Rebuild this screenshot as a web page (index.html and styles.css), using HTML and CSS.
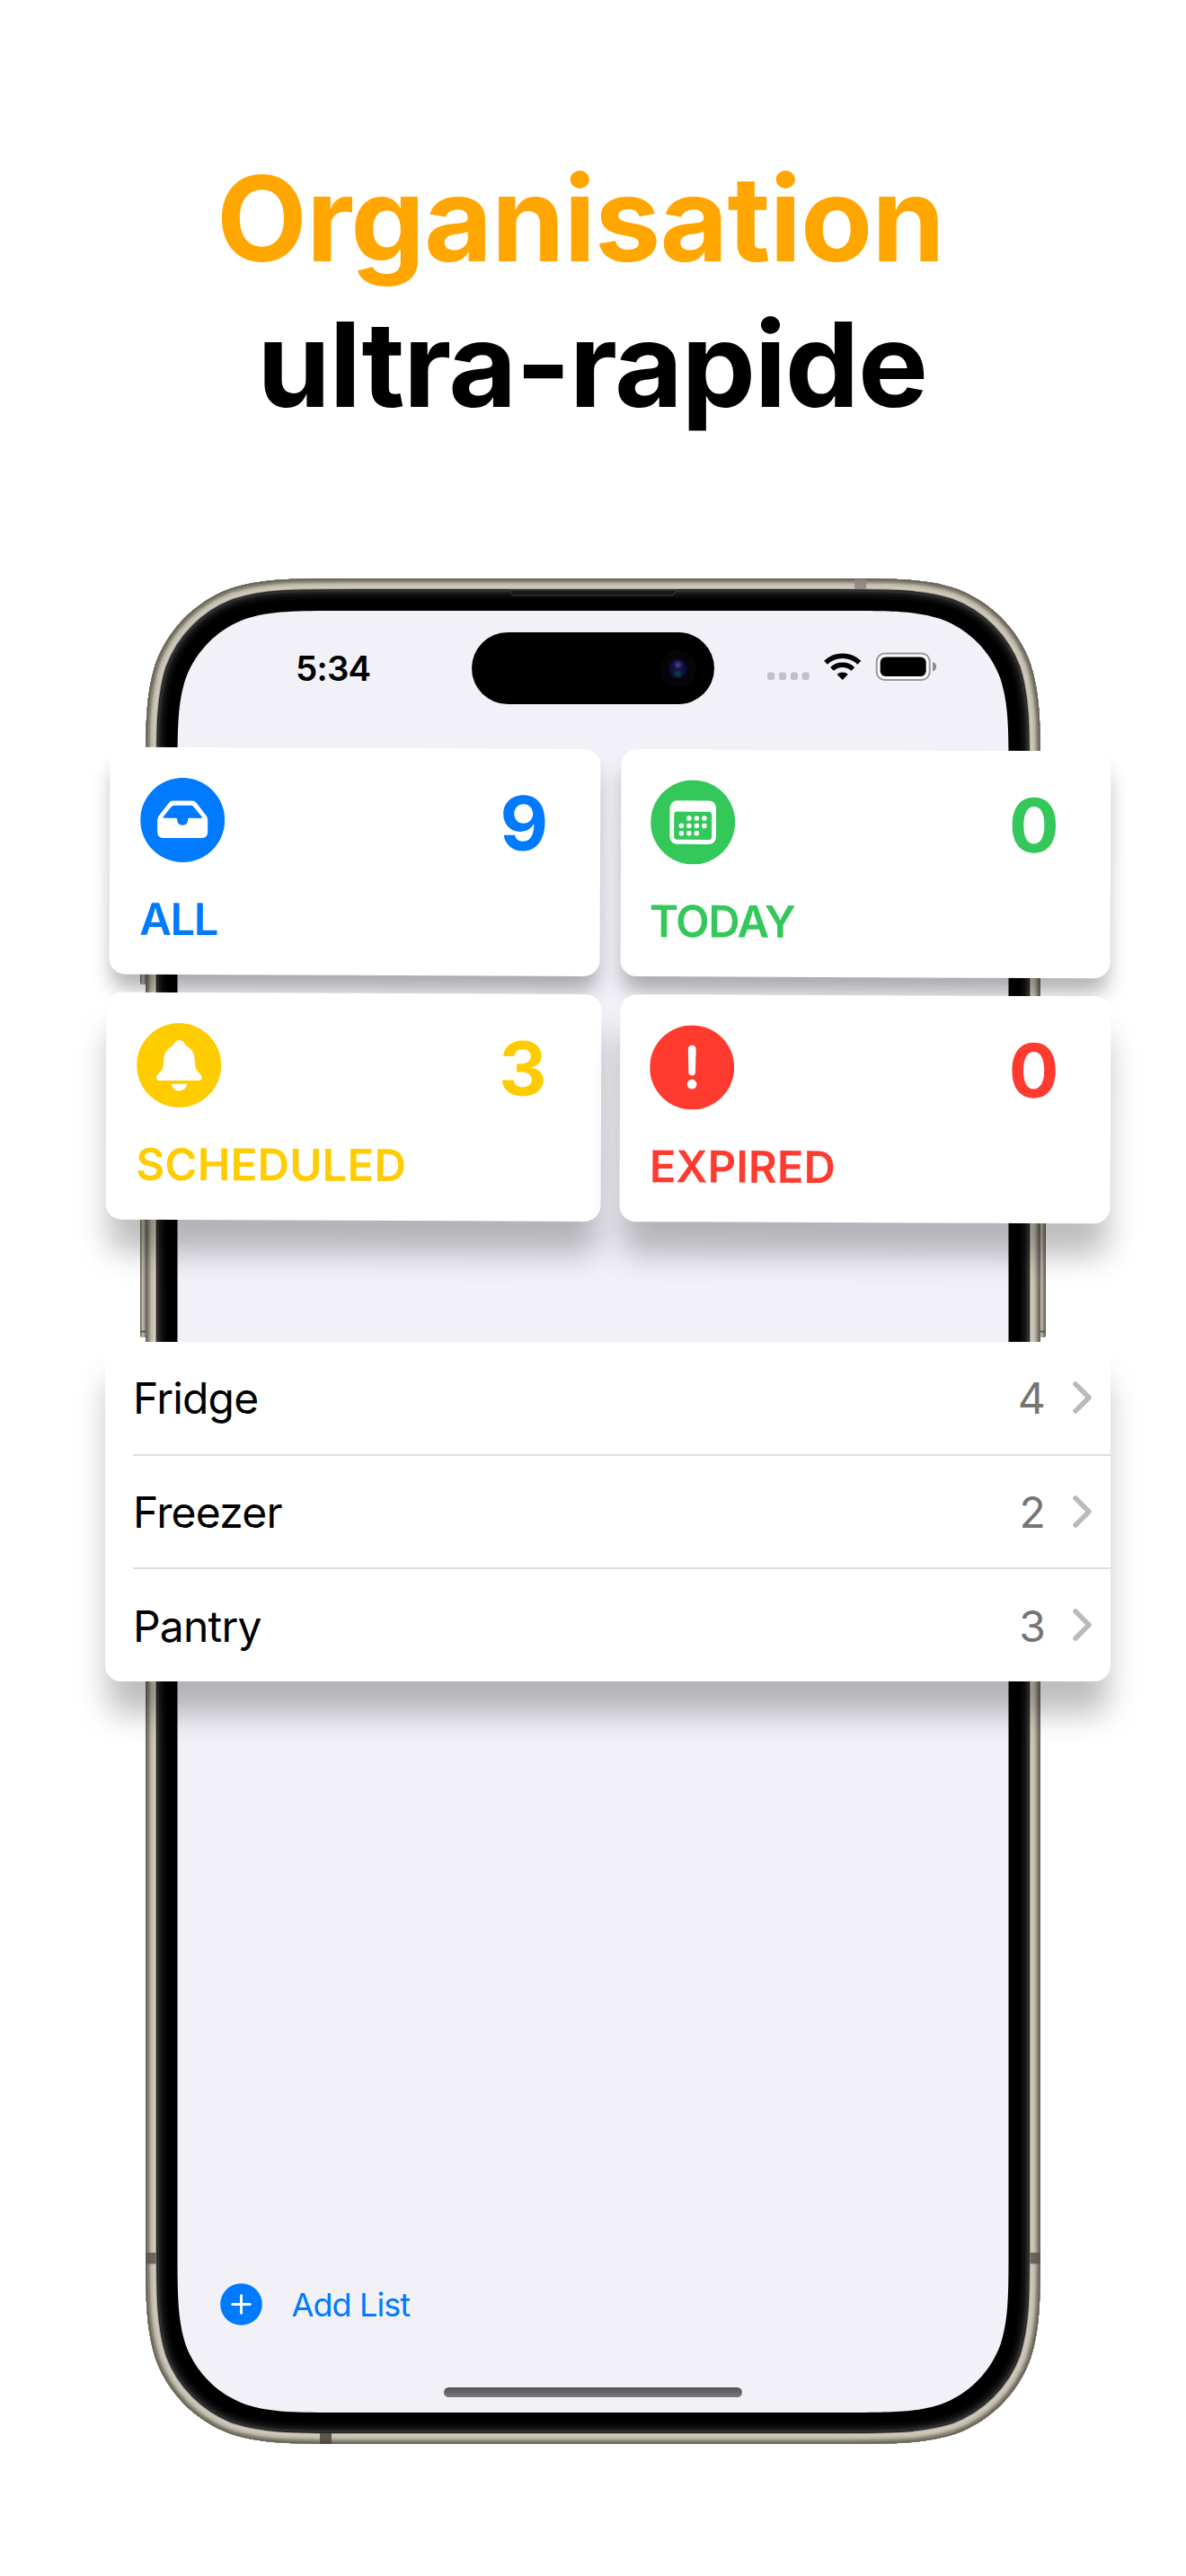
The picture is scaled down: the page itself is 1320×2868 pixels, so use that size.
FILE: index.html
```html
<!DOCTYPE html>
<html lang="fr">
<head>
    <meta charset="UTF-8">
    <meta name="viewport" content="width=device-width, initial-scale=1.0">
    <title>Organisation ultra-rapide</title>
    <link rel="stylesheet" href="styles.css">
</head>
<body>
    <h1 class="title">
        <span class="title-accent">Organisation</span>
        <span class="title-main">ultra-rapide</span>
    </h1>

    <div class="phone">
        <!-- Phone body -->
        <svg class="phone-body" viewBox="-10 0 1016 2077" width="1016" height="2077">
            <defs>
                <path id="shell" d="M229.3 0H766.7C832.7 0 865.7 0 901.3 11.2C940.1 25.4 970.6 55.9 984.8 94.7C996 130.3 996 163.3 996 229.3V1847.7C996 1913.7 996 1946.7 984.8 1982.3C970.6 2021.1 940.1 2051.6 901.3 2065.8C865.7 2077 832.7 2077 766.7 2077H229.3C163.3 2077 130.3 2077 94.7 2065.8C55.9 2051.6 25.4 2021.1 11.2 1982.3C0 1946.7 0 1913.7 0 1847.7V229.3C0 163.3 0 130.3 11.2 94.7C25.4 55.9 55.9 25.4 94.7 11.2C130.3 0 163.3 0 229.3 0Z"/>
                <clipPath id="shellClip"><use href="#shell"/></clipPath>
                <linearGradient id="button" x1="0" x2="1" y1="0" y2="0">
                    <stop offset="0" stop-color="#5d584d"/>
                    <stop offset="0.35" stop-color="#c4bfb0"/>
                    <stop offset="1" stop-color="#5d584d"/>
                </linearGradient>
            </defs>
            <rect x="-6" y="300" width="8" height="152" rx="2" fill="url(#button)"/>
            <rect x="-6" y="580" width="8" height="265" rx="2" fill="url(#button)"/>
            <rect x="994" y="560" width="8" height="285" rx="2" fill="url(#button)"/>
            <path d="M-6 838.500H0M996 838.500H1002" stroke="#5d584d" stroke-width="2"/>
            <g clip-path="url(#shellClip)" fill="none">
                <use href="#shell" fill="#000"/>
                <use href="#shell" stroke="#060606" stroke-width="46"/>
                <use href="#shell" stroke="#101010" stroke-width="40"/>
                <use href="#shell" stroke="#1e1e1e" stroke-width="34"/>
                <use href="#shell" stroke="#303030" stroke-width="30"/>
                <use href="#shell" stroke="#25231e" stroke-width="26"/>
                <use href="#shell" stroke="#a39e90" stroke-width="24"/>
                <use href="#shell" stroke="#cdc8b9" stroke-width="22"/>
                <use href="#shell" stroke="#bfbaab" stroke-width="16"/>
                <use href="#shell" stroke="#a39e90" stroke-width="11"/>
                <use href="#shell" stroke="#878275" stroke-width="8"/>
                <use href="#shell" stroke="#6c675b" stroke-width="4"/>
                <rect x="789" y="1" width="13" height="11" fill="#8d847e" opacity="0.85"/>
                <rect x="194" y="2065" width="13" height="12" fill="#4a433d" opacity="0.85"/>
                <rect x="0" y="1864" width="11.5" height="12.5" fill="#5c554f" opacity="0.85"/>
                <rect x="984.5" y="1864" width="11.5" height="12.5" fill="#5c554f" opacity="0.85"/>
            </g>
            <path d="M405 13L409 19H587L591 13Z" fill="#161616" stroke="#3c3c3c" stroke-width="1"/>
            <path fill="#f2f1f8" d="M218.9 36H777.1C829.9 36 856.3 36 884.7 45C915.8 56.3 940.2 80.7 951.5 111.8C960.5 140.2 960.5 166.6 960.5 219.4V1858.6C960.5 1911.4 960.5 1937.8 951.5 1966.2C940.2 1997.3 915.8 2021.7 884.7 2033C856.3 2042 829.9 2042 777.1 2042H218.9C166.1 2042 139.7 2042 111.3 2033C80.2 2021.7 55.8 1997.3 44.5 1966.2C35.5 1937.8 35.5 1911.4 35.5 1858.6V219.4C35.5 166.6 35.5 140.2 44.5 111.8C55.8 80.7 80.2 56.3 111.3 45C139.7 36 166.1 36 218.9 36Z"/>
        </svg>

        <div class="status-bar">
            <span class="time">5:34</span>
            <div class="island">
                <div class="camera"></div>
            </div>
            <svg class="status-icons" width="190" height="32" viewBox="0 0 190 32">
                <g fill="#c2c1c7">
                    <rect x="0" y="22.500" width="8" height="8.500" rx="2.500"/>
                    <rect x="13" y="22.500" width="8" height="8.500" rx="2.500"/>
                    <rect x="26" y="22.500" width="8" height="8.500" rx="2.500"/>
                    <rect x="38.700" y="22.500" width="8" height="8.500" rx="2.500"/>
                </g>
                <path d="M65 11.800A27 27 0 0 1 102.400 11.800" fill="none" stroke="#000" stroke-width="5.600"/>
                <path d="M72 18.900A17 17 0 0 1 95.400 18.900" fill="none" stroke="#000" stroke-width="5.400"/>
                <path d="M77.500 24.800A9.500 9.500 0 0 1 89.900 24.800L83.700 31Z" fill="#000"/>
                <rect x="121.700" y="1.500" width="59" height="29.500" rx="9" fill="#fbfbfd" stroke="#98979c" stroke-width="2"/>
                <rect x="125.700" y="5.500" width="51" height="21.500" rx="6" fill="#000"/>
                <path d="M184 11Q188 12 188 16.300Q188 20.500 184 21.500Z" fill="#8e8d93"/>
            </svg>
        </div>

        <div class="toolbar">
            <svg width="47" height="47" viewBox="0 0 47 47">
                <circle cx="23.500" cy="23.500" r="23.300" fill="#007aff"/>
                <path d="M23.500 13.800V33.200M13.800 23.500H33.200" stroke="#fff" stroke-width="3" stroke-linecap="round"/>
            </svg>
            <span class="add-list">Add List</span>
        </div>
        <div class="home-indicator"></div>

        <!-- Enlarged widgets over the phone -->
        <div class="widgets">
            <div class="card-row card-row-top">
                <div class="card blue">
                    <div class="card-head">
                        <svg class="card-icon" viewBox="0 0 94 94">
                            <circle cx="47" cy="47" r="47" fill="currentColor"/>
                            <path d="M36 25.500H58Q61 25.500 62.600 28.200L73.300 42Q75 44.200 75 47V60.500Q75 67 68.500 67H25.500Q19 67 19 60.500V47Q19 44.200 20.700 42L31.400 28.200Q33 25.500 36 25.500Z" fill="#fff"/>
                            <path d="M37.500 30.800H56.500Q58.500 30.800 59.500 32.400L68.500 43.300Q69.300 44.800 67.500 44.800H54.600Q53 44.800 53 46.300Q53 52.800 47 52.800Q41 52.800 41 46.300Q41 44.800 39.400 44.800H26.500Q24.700 44.800 25.500 43.300L34.500 32.400Q35.500 30.800 37.500 30.800Z" fill="currentColor"/>
                        </svg>
                        <span class="count">9</span>
                    </div>
                    <div class="card-label">ALL</div>
                </div>
                <div class="card green">
                    <div class="card-head">
                        <svg class="card-icon" viewBox="0 0 94 94">
                            <circle cx="47" cy="47" r="47" fill="currentColor"/>
                            <rect x="21.300" y="23" width="51.500" height="48.500" rx="8" fill="#fff"/>
                            <rect x="26" y="35.300" width="42" height="31.200" rx="3.500" fill="currentColor"/>
                            <g fill="#fff">
                                <rect x="40" y="40" width="5.400" height="5.400" rx="1.800"/>
                                <rect x="48.500" y="40" width="5.400" height="5.400" rx="1.800"/>
                                <rect x="57" y="40" width="5.400" height="5.400" rx="1.800"/>
                                <rect x="31.500" y="48.300" width="5.400" height="5.400" rx="1.800"/>
                                <rect x="40" y="48.300" width="5.400" height="5.400" rx="1.800"/>
                                <rect x="48.500" y="48.300" width="5.400" height="5.400" rx="1.800"/>
                                <rect x="57" y="48.300" width="5.400" height="5.400" rx="1.800"/>
                                <rect x="31.500" y="56.700" width="5.400" height="5.400" rx="1.800"/>
                                <rect x="40" y="56.700" width="5.400" height="5.400" rx="1.800"/>
                                <rect x="48.500" y="56.700" width="5.400" height="5.400" rx="1.800"/>
                            </g>
                        </svg>
                        <span class="count">0</span>
                    </div>
                    <div class="card-label">TODAY</div>
                </div>
            </div>

            <div class="card-row card-row-bottom">
                <div class="card yellow">
                    <div class="card-head">
                        <svg class="card-icon" viewBox="0 0 94 94">
                            <circle cx="47" cy="47" r="47" fill="currentColor"/>
                            <path d="M47.300 19.300C51 19.300 53 21.500 54.300 25C61.500 28.500 64.500 34.500 64.700 42C64.900 49 65.500 51.500 69 55C71.500 57.500 72.700 59.500 72.700 61C72.700 63 71.500 64 69.500 64H25C23 64 21.900 63 21.900 61C21.900 59.500 23 57.500 25.600 55C29.100 51.500 29.700 49 29.900 42C30.100 34.500 33 28.500 40.300 25C41.600 21.500 43.600 19.300 47.300 19.300Z" fill="#fff"/>
                            <path d="M38.800 67.700H55.800C55.300 72.500 51.800 75.400 47.300 75.400C42.800 75.400 39.300 72.500 38.800 67.700Z" fill="#fff"/>
                        </svg>
                        <span class="count">3</span>
                    </div>
                    <div class="card-label">SCHEDULED</div>
                </div>
                <div class="card red">
                    <div class="card-head">
                        <svg class="card-icon" viewBox="0 0 94 94">
                            <circle cx="47" cy="47" r="47" fill="currentColor"/>
                            <path d="M47 22.300C49.600 22.300 51.500 24 51.400 26.700L50.800 52.300C50.700 54.700 49.300 56 47 56C44.700 56 43.300 54.700 43.200 52.300L42.600 26.700C42.500 24 44.400 22.300 47 22.300Z" fill="#fff"/>
                            <circle cx="47" cy="65.800" r="5.400" fill="#fff"/>
                        </svg>
                        <span class="count">0</span>
                    </div>
                    <div class="card-label">EXPIRED</div>
                </div>
            </div>

            <ul class="list">
                <li class="list-row">
                    <span class="list-name">Fridge</span>
                    <span class="list-count">4</span>
                    <svg class="chevron" viewBox="0 0 21 36"><path d="M3 3L18 18L3 33"/></svg>
                </li>
                <li class="list-row">
                    <span class="list-name">Freezer</span>
                    <span class="list-count">2</span>
                    <svg class="chevron" viewBox="0 0 21 36"><path d="M3 3L18 18L3 33"/></svg>
                </li>
                <li class="list-row">
                    <span class="list-name">Pantry</span>
                    <span class="list-count">3</span>
                    <svg class="chevron" viewBox="0 0 21 36"><path d="M3 3L18 18L3 33"/></svg>
                </li>
            </ul>
        </div>
    </div>
</body>
</html>
```
FILE: styles.css
```css
* {
    box-sizing: border-box;
}

body {
    margin: 0;
    height: 2868px;
    padding-top: 163px;
    background-color: #fff;
    font-family: Inter, "Liberation Sans", sans-serif;
    overflow: hidden;
}

.title {
    margin: 0;
    font-size: 131px;
    line-height: 162px;
    font-weight: 700;
    text-align: center;
}

.title span {
    display: block;
}

.title-accent {
    color: #ffa600;
    letter-spacing: -1px;
    padding-right: 28px;
}

.title-main {
    color: #000;
    letter-spacing: -1.4px;
    padding-right: 2px;
}

.phone {
    position: relative;
    display: flex;
    flex-direction: column;
    width: 996px;
    height: 2077px;
    margin: 157px 0 0 162px;
    padding: 60px 0 52px;
}

.phone-body {
    position: absolute;
    top: 0;
    left: -10px;
}

.status-bar {
    position: relative;
    display: flex;
    align-items: center;
    height: 80px;
}

.time {
    width: 196px;
    margin-left: 167px;
    padding-bottom: 1px;
    font-size: 38.5px;
    font-weight: 600;
    letter-spacing: -0.8px;
}

.island {
    display: flex;
    align-items: center;
    justify-content: flex-end;
    width: 270px;
    height: 80px;
    padding-right: 30px;
    border-radius: 40px;
    background-color: #000;
}

.camera {
    width: 21px;
    height: 21px;
    border-radius: 50%;
    background: radial-gradient(circle at 50% 30%, #4c4f8c 0, #15164a 25%, transparent 45%),
        radial-gradient(circle at 50% 75%, #0d4a4c 0, #10103a 30%, #0a0a33 60%, #0c0c26 100%);
    box-shadow: 0 0 0 10px #060408;
}

.status-icons {
    margin: -4px 0 0 59px;
}

.toolbar {
    position: relative;
    display: flex;
    align-items: center;
    gap: 33px;
    margin: auto 0 69px 82.5px;
}

.add-list {
    color: #007aff;
    font-size: 36px;
    letter-spacing: -0.9px;
}

.home-indicator {
    position: relative;
    width: 332px;
    height: 11px;
    margin: 0 auto;
    border-radius: 6px;
    background: linear-gradient(#535456, #7a7a7c);
}

/* Widgets */
.widgets {
    position: absolute;
    top: 190.4px;
    left: -45px;
    width: 1119px;
}

.card-row {
    display: flex;
    height: 252.5px;
    transform: rotate(0.24deg);
}

.card-row-top {
    gap: 22.8px;
    margin: 0 0 19.7px 5.3px;
    width: 1114.2px;
}

.card-row-bottom {
    gap: 20.5px;
    margin-left: 0.5px;
    width: 1118px;
}

.card {
    flex: 1;
    padding: 34px 57.5px 0 33.5px;
    border-radius: 18px;
    background-color: #fff;
}

.card-row-top .card {
    box-shadow: 0 19px 22px -3px rgba(0, 0, 0, 0.3);
}

.card-row-bottom .card,
.list {
    box-shadow: 0 39px 34px -3px rgba(0, 0, 0, 0.26);
}

.card-row-bottom .yellow {
    flex: 0 0 551px;
}

.card-head {
    display: flex;
    align-items: center;
    justify-content: space-between;
    height: 94px;
}

.card-icon {
    width: 94px;
    height: 94px;
}

.count {
    padding-top: 4px;
    font-size: 83px;
    line-height: 90px;
    font-weight: 700;
}

.card-label {
    margin-top: 34px;
    font-size: 49px;
    line-height: 60px;
    font-weight: 600;
}

.blue {
    color: #007aff;
}

.green {
    color: #34c759;
}

.yellow {
    color: #ffcc00;
}

.red {
    color: #ff3b30;
}

.blue .card-label,
.green .card-label {
    letter-spacing: -1.4px;
}

.green .card-label {
    margin-left: -1px;
}

.yellow .card-label {
    letter-spacing: 0.3px;
}

.yellow .count {
    margin-right: 3px;
}

.list {
    height: 378px;
    margin: 135px 0 0;
    padding: 0 0 0 31px;
    border-radius: 18px;
    background-color: #fff;
    list-style: none;
}

.list-row {
    display: flex;
    align-items: center;
    height: 126.7px;
    padding: 1px 21px 0 0;
    border-bottom: 2px solid #dedede;
    font-size: 48px;
    letter-spacing: -0.8px;
}

.list-row:last-child {
    height: 124.6px;
    border-bottom: none;
}

.list-name {
    flex: 1;
}

.list-count {
    color: #757575;
    margin-right: 31px;
}

.chevron {
    width: 21px;
    height: 36px;
    margin-top: -2px;
    fill: none;
    stroke: #bababa;
    stroke-width: 5.5;
    stroke-linecap: round;
    stroke-linejoin: round;
}
```
